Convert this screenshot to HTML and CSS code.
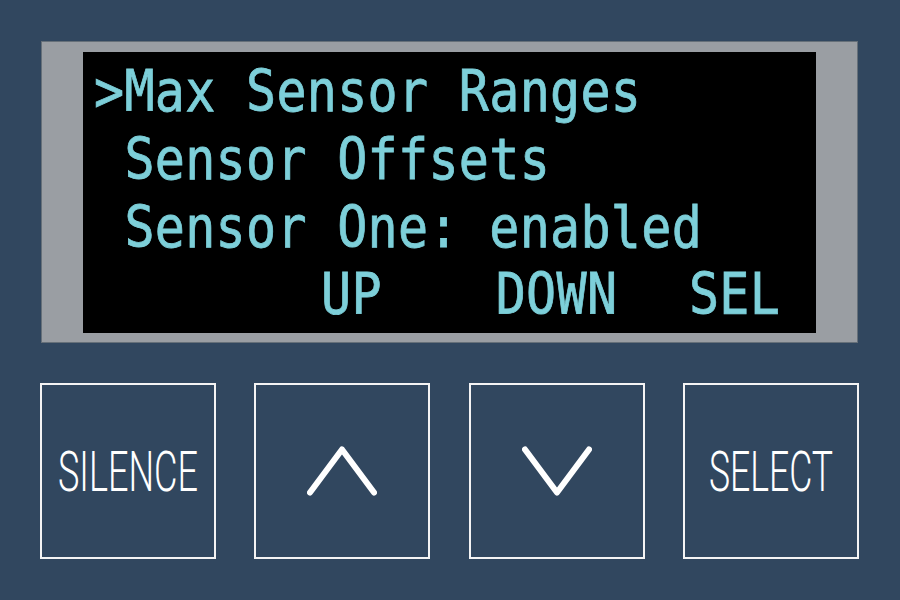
FILE: index.html
```html
<!DOCTYPE html>
<html lang="en">
<head>
<meta charset="utf-8">
<title>Alarm Panel</title>
<link rel="stylesheet" href="styles.css">
</head>
<body>
<div class="panel">
  <div class="bezel">
    <div class="screen">
      <div class="lcd">
        <div class="row">&gt;Max Sensor Ranges</div>
        <div class="row"> Sensor Offsets</div>
        <div class="row"> Sensor One: enabled</div>
        <div class="row softkeys"><span class="key key-up">UP</span><span class="key key-down">DOWN</span><span class="key key-sel">SEL</span></div>
      </div>
    </div>
  </div>
  <div class="buttons">
    <button class="btn" type="button">
      <svg class="label" width="172" height="60" viewBox="0 0 172 60"><text x="86" y="50" textLength="140" lengthAdjust="spacingAndGlyphs">SILENCE</text></svg>
    </button>
    <button class="btn" type="button" aria-label="Up">
      <svg class="chevron" width="70" height="50" viewBox="0 0 70 50"><polyline points="3,46.5 35,3.5 67,46.5"/></svg>
    </button>
    <button class="btn" type="button" aria-label="Down">
      <svg class="chevron" width="70" height="50" viewBox="0 0 70 50"><polyline points="3,3.5 35,46.5 67,3.5"/></svg>
    </button>
    <button class="btn" type="button">
      <svg class="label" width="172" height="60" viewBox="0 0 172 60"><text x="86" y="50" textLength="124" lengthAdjust="spacingAndGlyphs">SELECT</text></svg>
    </button>
  </div>
</div>
</body>
</html>
```
FILE: styles.css
```css
html, body {
  margin: 0;
  padding: 0;
}

body {
  width: 900px;
  height: 600px;
  overflow: hidden;
  background: #31475f;
}

.panel {
  padding: 41px 42px 0 41px;
}

/* grey frame around the display */
.bezel {
  background: #9a9ea3;
  padding: 11px 42px 10px 42px;
  box-shadow: inset 0 0 0 1px rgba(40, 55, 70, 0.45);
}

.screen {
  background: #000;
  height: 281px;
  box-sizing: border-box;
  padding: 6px 0 0 11px;
  overflow: hidden;
}

.lcd {
  font-family: "DejaVu Sans Mono", "Liberation Mono", monospace;
  font-size: 50px;
  line-height: 59px;
  letter-spacing: 0.3px;
  color: #7dcfd9;
  -webkit-text-stroke: 0.7px #7dcfd9;
  transform: scaleY(1.15);
  transform-origin: 0 0;
}

.row {
  white-space: pre;
}

.softkeys {
  display: flex;
  margin-left: 224px;
}

.key {
  display: block;
  text-align: center;
}

.key-up { width: 67px; }
.key-down { width: 167px; margin-left: 88px; }
.key-sel { width: 97px; margin-left: 46px; }

/* hardware keys */
.buttons {
  display: flex;
  justify-content: space-between;
  margin: 40px -1px 0 -1px;
}

.btn {
  width: 176px;
  height: 176px;
  box-sizing: border-box;
  border: 2px solid #f4f4f4;
  background: transparent;
  padding: 0;
  margin: 0;
  display: flex;
  align-items: center;
  justify-content: center;
}

.label text {
  font-family: Roboto, "Liberation Sans", sans-serif;
  font-weight: 300;
  font-size: 56px;
  fill: #ffffff;
  text-anchor: middle;
}

.chevron polyline {
  fill: none;
  stroke: #ffffff;
  stroke-width: 6;
  stroke-linecap: round;
  stroke-linejoin: round;
}
```
